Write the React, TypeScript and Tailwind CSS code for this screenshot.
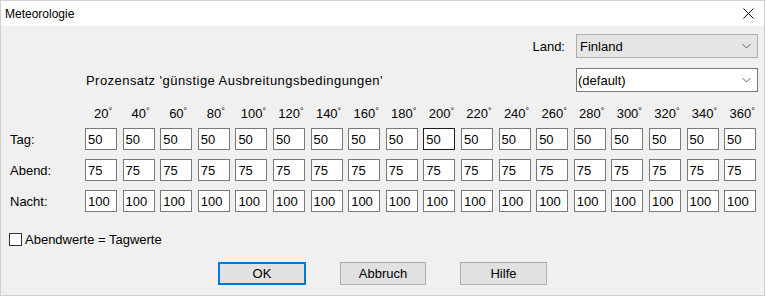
import React from "react";

const degrees = [20, 40, 60, 80, 100, 120, 140, 160, 180, 200, 220, 240, 260, 280, 300, 320, 340, 360];

function Chevron() {
  return (
    <svg width="9" height="6" viewBox="0 0 9 6" className="shrink-0">
      <path d="M0.5 1 L4.5 5 L8.5 1" fill="none" stroke="#606060" strokeWidth="1" />
    </svg>
  );
}

function Row({ label, value, focus }: { label: string; value: string; focus?: boolean }) {
  return (
    <div className="flex items-center h-[22px]">
      <div className="w-[84px] pl-[9px] text-[13px] leading-none">{label}</div>
      <div className="grid grid-cols-[repeat(18,37.6px)]">
        {degrees.map((d) => (
          <div
            key={d}
            className={
              "w-[32px] h-[22px] bg-white border flex items-center pl-[2px] text-[13px] leading-none " +
              (focus && d === 200 ? "border-[#1e1e1e]" : "border-[#7a7a7a]")
            }
          >
            {value}
          </div>
        ))}
      </div>
    </div>
  );
}

export default function App() {
  return (
    <div className="w-[766px] h-[297px] bg-white text-black font-['Liberation_Sans',Arial,sans-serif]">
      <div className="w-[765px] h-[296px] border border-[#d0d0d0] flex flex-col">
        <div className="h-[25px] bg-white flex items-center justify-between pl-[4px] pr-[10px]">
          <span className="text-[12px] leading-none">Meteorologie</span>
          <svg width="11" height="11" viewBox="0 0 11 11">
            <path d="M0.5 0.5 L10.5 10.5 M10.5 0.5 L0.5 10.5" stroke="#000" strokeWidth="1" fill="none" />
          </svg>
        </div>
        <div className="flex-1 bg-[#f0f0f0] flex flex-col">
          <div className="flex items-center justify-end pr-[6px] mt-[8px]">
            <span className="text-[13px] leading-none mr-[11px]">Land:</span>
            <div className="w-[182px] h-[24px] bg-[#e5e5e5] border border-[#adadad] flex items-center justify-between pl-[3px] pr-[6px] text-[13px] leading-none">
              <span>Finland</span>
              <Chevron />
            </div>
          </div>
          <div className="flex items-center justify-between pl-[85px] pr-[6px] mt-[10px]">
            <span className="text-[13px] leading-none tracking-[0.45px]">Prozensatz 'günstige Ausbreitungsbedingungen'</span>
            <div className="w-[182px] h-[24px] bg-white border border-[#7a7a7a] flex items-center justify-between pl-[1px] pr-[6px] text-[13px] leading-none">
              <span>(default)</span>
              <Chevron />
            </div>
          </div>
          <div className="flex items-center h-[16px] mt-[13px]">
            <div className="w-[84px]" />
            <div className="grid grid-cols-[repeat(18,37.6px)]">
              {degrees.map((d) => (
                <div key={d} className="w-[32px] text-center pl-[4px] text-[13px] leading-none whitespace-nowrap">
                  {d}
                  <span className="text-[9px] align-top">°</span>
                </div>
              ))}
            </div>
          </div>
          <div className="flex flex-col gap-[9px] mt-[7px]">
            <Row label="Tag:" value="50" focus />
            <Row label="Abend:" value="75" />
            <Row label="Nacht:" value="100" />
          </div>
          <div className="flex items-center pl-[8px] mt-[21px]">
            <div className="w-[13px] h-[13px] bg-white border border-[#333333]" />
            <span className="ml-[3px] text-[13px] leading-none">Abendwerte = Tagwerte</span>
          </div>
          <div className="flex items-center mt-[16px]">
            <div className="ml-[217px] w-[88px] h-[23px] bg-[#e1e1e1] border-2 border-[#0078d7] flex items-center justify-center text-[13px] leading-none">
              OK
            </div>
            <div className="ml-[34px] w-[86px] h-[23px] bg-[#e1e1e1] border border-[#adadad] flex items-center justify-center text-[13px] leading-none">
              Abbruch
            </div>
            <div className="ml-[34px] w-[87px] h-[23px] bg-[#e1e1e1] border border-[#adadad] flex items-center justify-center text-[13px] leading-none">
              Hilfe
            </div>
          </div>
        </div>
      </div>
    </div>
  );
}
